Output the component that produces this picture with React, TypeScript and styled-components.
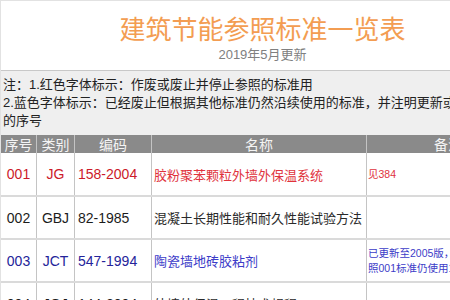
import styled, { createGlobalStyle } from 'styled-components';

const GlobalStyle = createGlobalStyle`
  html, body {
    margin: 0;
    padding: 0;
    background: #ffffff;
    overflow: hidden;
  }
  body {
    font-family: 'Liberation Sans', 'Noto Sans CJK SC', sans-serif;
  }
`;

const Page = styled.div`
  width: 524px;
  border-top: 1px solid #e2e2e2;
  border-left: 1px solid #e2e2e2;
  box-sizing: border-box;
`;

const TitleBlock = styled.div`
  height: 70px;
  display: flex;
  flex-direction: column;
  align-items: center;
  border-bottom: 1px solid #c8c8c8;
  box-sizing: border-box;
`;

const Title = styled.h1`
  margin: 9px 0 0;
  font-family: 'Noto Sans CJK SC', sans-serif;
  font-weight: 400;
  font-size: 26px;
  line-height: 36px;
  color: #f39d52;
`;

const Subtitle = styled.div`
  font-family: 'Liberation Sans', 'Noto Sans CJK SC', sans-serif;
  font-size: 13px;
  line-height: 18px;
  color: #808080;
`;

const Notes = styled.div`
  background: #efefef;
  padding: 5px 0 5px 2px;
  font-family: 'Liberation Sans', 'Noto Sans CJK SC', sans-serif;
  font-size: 13px;
  line-height: 18px;
  color: #222;
  white-space: nowrap;
`;

const Table = styled.table`
  border-collapse: collapse;
  table-layout: fixed;
  width: 524px;
`;

const Head = styled.th<{ $w: number }>`
  width: ${(p) => p.$w}px;
  height: 18px;
  padding: 0;
  background: #8a8a8a;
  color: #f4f4f4;
  font-family: 'Noto Sans CJK SC', sans-serif;
  font-weight: 400;
  font-size: 14px;
  line-height: 18px;
  text-align: center;
  border-right: 1px solid #c4c4c4;
`;

const Row = styled.tr`
  height: 43px;
  border-bottom: 2px solid #dadada;
`;

type Tone = 'red' | 'black' | 'blue';

const tones: Record<Tone, { code: string; name: string }> = {
  red: { code: '#cc1a2a', name: '#e0323c' },
  black: { code: '#1c1c1c', name: '#2a2a2a' },
  blue: { code: '#24249a', name: '#3c3cc8' },
};

const Cell = styled.td<{ $tone: Tone; $align?: string }>`
  padding: 0 3px;
  border-right: 1px solid #c4c4c4;
  color: ${(p) => tones[p.$tone].code};
  font-family: 'Liberation Sans', 'Noto Sans CJK SC', sans-serif;
  font-size: 14px;
  text-align: ${(p) => p.$align || 'left'};
  white-space: nowrap;
  overflow: hidden;
`;

const NameCell = styled(Cell)`
  color: ${(p) => tones[p.$tone].name};
  font-family: 'Noto Sans CJK SC', sans-serif;
  font-size: 13px;
  padding-left: 2px;
`;

const NoteCell = styled(Cell)`
  color: ${(p) => tones[p.$tone].name};
  font-family: 'Liberation Sans', 'Noto Sans CJK SC', sans-serif;
  font-size: 10.5px;
  line-height: 15px;
  padding: 0 1px;
`;

const rows: { no: string; cat: string; code: string; name: string; note: string[]; tone: Tone }[] = [
  { no: '001', cat: 'JG', code: '158-2004', name: '胶粉聚苯颗粒外墙外保温系统', note: ['见384'], tone: 'red' },
  { no: '002', cat: 'GBJ', code: '82-1985', name: '混凝土长期性能和耐久性能试验方法', note: [], tone: 'black' },
  {
    no: '003',
    cat: 'JCT',
    code: '547-1994',
    name: '陶瓷墙地砖胶粘剂',
    note: ['已更新至2005版，见304，参', '照001标准仍使用1994版'],
    tone: 'blue',
  },
  { no: '004', cat: 'JGJ', code: '144-2004', name: '外墙外保温工程技术规程', note: [], tone: 'black' },
];

export default function App() {
  return (
    <Page>
      <GlobalStyle />
      <TitleBlock>
        <Title>建筑节能参照标准一览表</Title>
        <Subtitle>2019年5月更新</Subtitle>
      </TitleBlock>
      <Notes>
        <div>注：1.红色字体标示：作废或废止并停止参照的标准用</div>
        <div>2.蓝色字体标示：已经废止但根据其他标准仍然沿续使用的标准，并注明更新或参照</div>
        <div>的序号</div>
      </Notes>
      <Table>
        <thead>
          <tr>
            <Head $w={35}>序号</Head>
            <Head $w={37}>类别</Head>
            <Head $w={76}>编码</Head>
            <Head $w={214}>名称</Head>
            <Head $w={162}>备注</Head>
          </tr>
        </thead>
        <tbody>
          {rows.map((r) => (
            <Row key={r.no}>
              <Cell $tone={r.tone} $align="center">{r.no}</Cell>
              <Cell $tone={r.tone} $align="center">{r.cat}</Cell>
              <Cell $tone={r.tone}>{r.code}</Cell>
              <NameCell $tone={r.tone}>{r.name}</NameCell>
              <NoteCell $tone={r.tone}>
                {r.note.map((line) => (
                  <div key={line}>{line}</div>
                ))}
              </NoteCell>
            </Row>
          ))}
        </tbody>
      </Table>
    </Page>
  );
}
